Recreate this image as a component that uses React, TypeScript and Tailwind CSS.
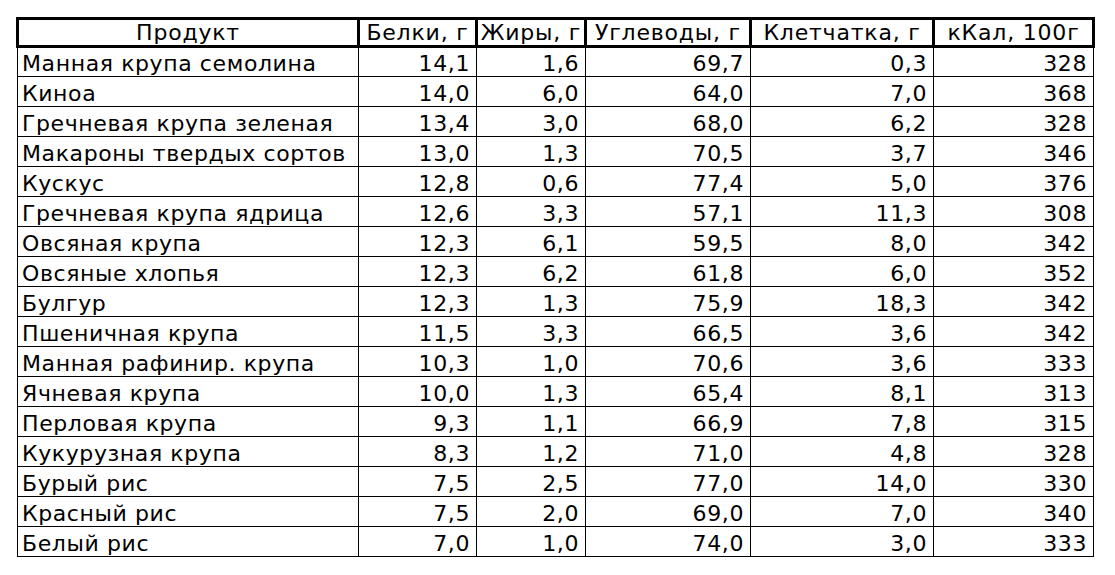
const rows: [string, string, string, string, string, string][] = [
  ["Манная крупа семолина", "14,1", "1,6", "69,7", "0,3", "328"],
  ["Киноа", "14,0", "6,0", "64,0", "7,0", "368"],
  ["Гречневая крупа зеленая", "13,4", "3,0", "68,0", "6,2", "328"],
  ["Макароны твердых сортов", "13,0", "1,3", "70,5", "3,7", "346"],
  ["Кускус", "12,8", "0,6", "77,4", "5,0", "376"],
  ["Гречневая крупа ядрица", "12,6", "3,3", "57,1", "11,3", "308"],
  ["Овсяная крупа", "12,3", "6,1", "59,5", "8,0", "342"],
  ["Овсяные хлопья", "12,3", "6,2", "61,8", "6,0", "352"],
  ["Булгур", "12,3", "1,3", "75,9", "18,3", "342"],
  ["Пшеничная крупа", "11,5", "3,3", "66,5", "3,6", "342"],
  ["Манная рафинир. крупа", "10,3", "1,0", "70,6", "3,6", "333"],
  ["Ячневая крупа", "10,0", "1,3", "65,4", "8,1", "313"],
  ["Перловая крупа", "9,3", "1,1", "66,9", "7,8", "315"],
  ["Кукурузная крупа", "8,3", "1,2", "71,0", "4,8", "328"],
  ["Бурый рис", "7,5", "2,5", "77,0", "14,0", "330"],
  ["Красный рис", "7,5", "2,0", "69,0", "7,0", "340"],
  ["Белый рис", "7,0", "1,0", "74,0", "3,0", "333"],
];

const headers = ["Продукт", "Белки, г", "Жиры, г", "Углеводы, г", "Клетчатка, г", "кКал, 100г"];

export default function App() {
  return (
    <div className="w-[1115px] h-[575px] bg-white text-black font-['DejaVu_Sans',sans-serif] pt-[17px] pl-[16px]">
      <table className="table-fixed border-collapse w-[1079px]">
        <colgroup>
          <col className="w-[341px]" />
          <col className="w-[118px]" />
          <col className="w-[109px]" />
          <col className="w-[165px]" />
          <col className="w-[183px]" />
          <col className="w-[160px]" />
        </colgroup>
        <thead>
          <tr className="h-[28px]">
            {headers.map((h) => (
              <th
                key={h}
                className="border-[3px] border-black p-0 text-center font-normal text-[22px] leading-[22px] tracking-[0.8px] align-middle whitespace-nowrap"
              >
                {h}
              </th>
            ))}
          </tr>
        </thead>
        <tbody>
          {rows.map((r) => (
            <tr key={r[0]} className="h-[30px]">
              <td className="border border-black pl-[4px] pb-[1px] text-left text-[22px] leading-[22px] tracking-[0.6px] align-bottom whitespace-nowrap">
                {r[0]}
              </td>
              {r.slice(1).map((v, i) => (
                <td
                  key={i}
                  className="border border-black pr-[6px] pb-[1px] text-right text-[22px] leading-[22px] tracking-[0.6px] align-bottom whitespace-nowrap"
                >
                  {v}
                </td>
              ))}
            </tr>
          ))}
        </tbody>
      </table>
    </div>
  );
}
